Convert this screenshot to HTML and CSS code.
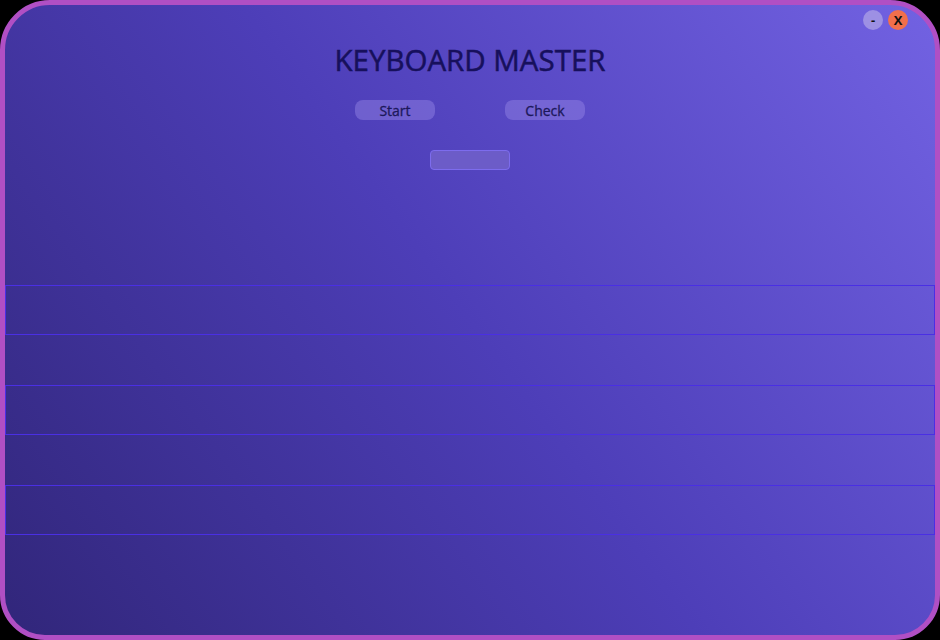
FILE: index.html
```html
<!DOCTYPE html>
<html>
<head>
<meta charset="utf-8">
<link rel="stylesheet" href="styles.css">
</head>
<body>
<div class="window">
  <div class="controls">
    <span class="ctl ctl-min">-</span>
    <span class="ctl ctl-close">X</span>
  </div>
  <h1 class="title">KEYBOARD MASTER</h1>
  <div class="actions">
    <button class="btn">Start</button>
    <button class="btn">Check</button>
  </div>
  <div class="field-wrap">
    <input class="field" type="text">
  </div>
  <div class="rows">
    <div class="row row-b"></div>
    <div class="row"></div>
    <div class="row row-b"></div>
    <div class="row"></div>
    <div class="row row-b"></div>
  </div>
</div>
</body>
</html>
```
FILE: styles.css
```css
html, body {
  margin: 0;
  padding: 0;
  background: #000;
}
.window {
  position: relative;
  box-sizing: border-box;
  width: 940px;
  height: 640px;
  border: 5px solid #b04fc4;
  border-radius: 50px 50px 45px 45px;
  background: linear-gradient(54deg, #31267a 0%, #4d3eb8 50%, #7262e2 100%);
  overflow: hidden;
  font-family: "Open Sans", "Noto Sans", sans-serif;
  display: flex;
  flex-direction: column;
  align-items: center;
}
.controls {
  position: absolute;
  top: 5px;
  right: 27px;
  display: flex;
  gap: 5px;
}
.ctl {
  width: 20px;
  height: 20px;
  border-radius: 50%;
  display: flex;
  align-items: center;
  justify-content: center;
  font-size: 13px;
  font-weight: 700;
  color: #111;
  line-height: 1;
}
.ctl-min { background: #9d90e4; }
.ctl-close { background: #f26f4b; }
.title {
  margin: 37px 0 0;
  font-size: 29.5px;
  font-weight: 400;
  line-height: 35px;
  color: #17105c;
  -webkit-text-stroke: 0.5px #17105c;
}
.actions {
  margin-top: 23px;
  display: flex;
  gap: 70px;
}
.btn {
  width: 80px;
  height: 20px;
  padding: 1px 0 0;
  border: none;
  border-radius: 8px;
  background: rgba(150, 135, 230, 0.45);
  color: #1c185a;
  font-family: "Open Sans", "Noto Sans", sans-serif;
  font-size: 14px;
  font-weight: 400;
  line-height: 19px;
  -webkit-text-stroke: 0.3px #1c185a;
}
.field-wrap {
  margin-top: 30px;
}
.field {
  display: block;
  box-sizing: border-box;
  width: 80px;
  height: 20px;
  margin: 0;
  padding: 0 4px;
  border: 1px solid #7d6cee;
  border-radius: 4px;
  background: #6c5cc8;
}
.rows {
  margin-top: 115px;
  align-self: stretch;
  display: flex;
  flex-direction: column;
}
.row {
  box-sizing: border-box;
  height: 50px;
}
.row-b {
  border: 1px solid #4a2fe4;
}
```
